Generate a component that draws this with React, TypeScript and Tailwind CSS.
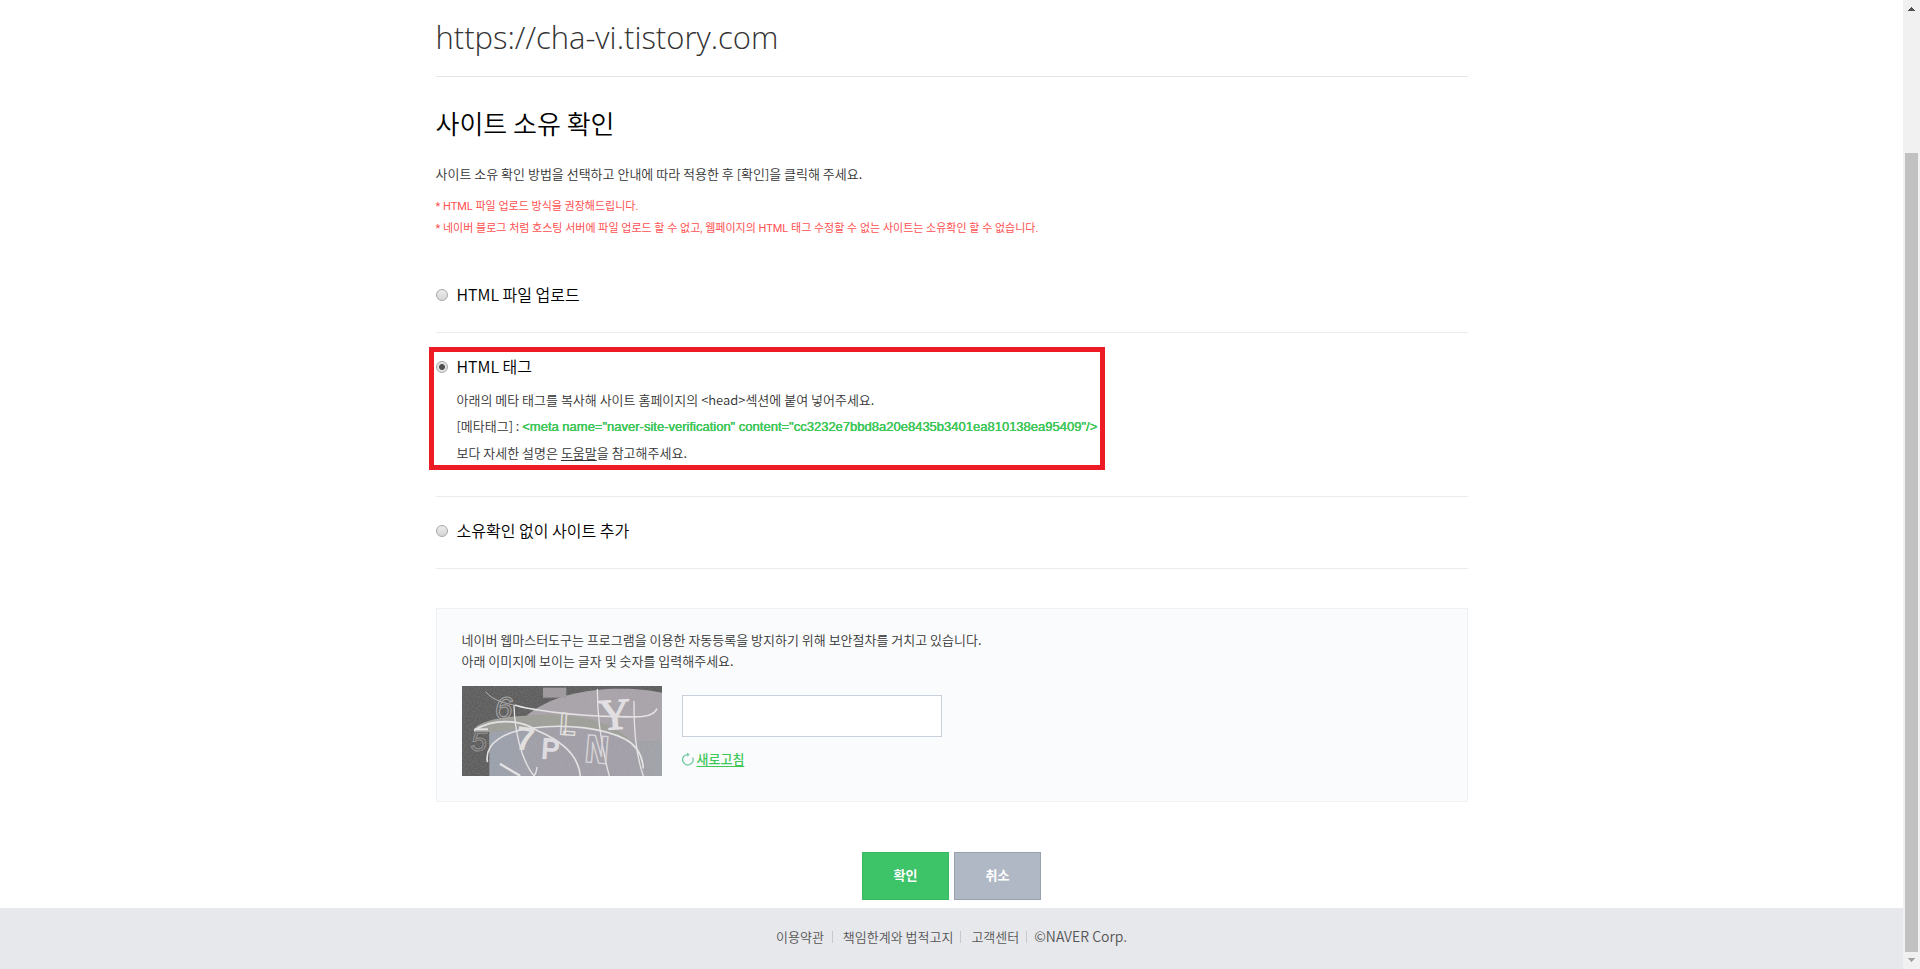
import { useState } from "react";
import type { ReactNode } from "react";

function Captcha() {
  return (
    <svg
      className="h-[90px] w-[200px] shrink-0"
      viewBox="0 0 600 270"
      role="img"
      aria-label="자동등록 방지 이미지"
    >
      <defs>
        <linearGradient id="fade" x1="0" x2="1" y1="0" y2="0">
          <stop offset="0" stopColor="#9aa1ac" />
          <stop offset="0.35" stopColor="#a19ea7" />
          <stop offset="0.8" stopColor="#a29fa8" />
          <stop offset="1" stopColor="#9fa3a8" />
        </linearGradient>
        <filter id="grain" x="0" y="0" width="1" height="1">
          <feTurbulence type="fractalNoise" baseFrequency="0.2" numOctaves="2" />
          <feColorMatrix values="0 0 0 0 0.6  0 0 0 0 0.6  0 0 0 0 0.6  0.9 0 0 0 -0.3" />
        </filter>
      </defs>
      <rect width="600" height="270" fill="#5e5e5e" />
      <path d="M190 92C260 30 370 8 480 8C530 8 570 14 600 20V270H190Z" fill="#a8a3a9" />
      <rect x="243" y="5" width="70" height="30" fill="#9d999d" />
      <path d="M36 138C30 112 110 92 190 89C250 84 310 84 350 92C420 106 480 130 510 170V200H82V138Z" fill="#9f9f99" />
      <path d="M82 142C120 134 160 130 210 126C320 112 430 128 490 160C530 168 570 164 600 166V270H82Z" fill="url(#fade)" />
      <rect width="600" height="270" filter="url(#grain)" opacity="0.3" />
      <g fill="none" stroke="#e4e2e3" strokeWidth="4" strokeLinecap="round">
        <path d="M72 18C92 44 130 52 160 58" strokeWidth="3" opacity="0.6" />
        <path d="M160 58C190 68 320 90 470 92C540 94 575 92 584 69" strokeWidth="5" />
        <path d="M38 132C90 100 170 96 230 136C300 166 350 210 355 270" strokeWidth="5" />
        <path d="M76 226C68 170 130 136 210 126C320 112 430 128 490 160C520 176 540 200 544 246" strokeWidth="5" />
        <path d="M156 60C158 130 176 220 216 270C224 260 224 250 225 244" />
        <path d="M406 10C406 100 420 190 442 270" />
        <path d="M516 46C516 130 520 200 544 270" />
        <path d="M116 235L172 268" strokeWidth="7" />
      </g>
      <g fontFamily="Liberation Sans, sans-serif">
        <text x="98" y="100" fontSize="96" fontWeight="400" fontStyle="italic" fill="none" stroke="#a9a7a7" strokeWidth="3">6</text>
        <text x="26" y="196" fontSize="88" fontWeight="400" fontStyle="italic" fill="none" stroke="#979595" strokeWidth="3">5</text>
        <path d="M38 130h40" stroke="#e4e2e3" strokeWidth="6" />
        <text x="162" y="192" fontSize="100" fontWeight="700" fill="#e2e0df" transform="rotate(8 185 160)">7</text>
        <text x="238" y="218" fontSize="84" fontWeight="400" fill="#dedce0" stroke="#dedce0" strokeWidth="4" fontFamily="Roboto, sans-serif" transform="rotate(4 250 190)">P</text>
        <text x="292" y="146" fontSize="90" fontWeight="700" fill="none" stroke="#e2e0de" strokeWidth="4" fontFamily="Roboto, sans-serif" transform="rotate(4 310 120)">L</text>
        <text x="368" y="230" fontSize="124" fontWeight="700" fill="none" stroke="#d6d4d7" strokeWidth="4" fontFamily="Liberation Mono, monospace" transform="rotate(5 400 190)">N</text>
      </g>
      <text x="410" y="130" fontSize="132" fontWeight="400" stroke="#e2dfe2" strokeWidth="4" fontFamily="Liberation Serif, serif" fill="#e2dfe2" transform="rotate(-4 452 84)">Y</text>
    </svg>
  );
}

function Option({
  value,
  label,
  selected,
  onSelect,
  children,
}: {
  value: string;
  label: string;
  selected: string;
  onSelect: (value: string) => void;
  children?: ReactNode;
}) {
  return (
    <li className="relative border-b border-[#ebebeb] pt-[22px] pb-[26px]">
      <div className="flex h-[23px] items-center gap-[9px]">
        <input
          type="radio"
          name="method"
          id={value}
          checked={selected === value}
          onChange={() => onSelect(value)}
          className="size-3 shrink-0 appearance-none rounded-full border border-[#a8a8a8] bg-linear-to-b from-[#ececec] to-[#d6d6d6] checked:bg-[radial-gradient(circle,#505050_0_2.5px,#e2e2e2_3.5px)]"
        />
        <label htmlFor={value} className="text-[16px] leading-[23px] text-black">
          {label}
        </label>
      </div>
      {children}
    </li>
  );
}

function ScrollBar() {
  return (
    <div className="flex w-[17px] shrink-0 flex-col items-center justify-between bg-[#f1f1f1]" aria-hidden="true">
      <svg className="h-[17px] w-[17px]" viewBox="0 0 17 17" shapeRendering="crispEdges">
        <path d="M8 7h1v1h1v1h1v1h1v1H5v-1h1V9h1V8h1z" fill="#505050" />
      </svg>
      <div className="mt-[136px] w-[13px] flex-1 bg-[#c1c1c1]" />
      <svg className="h-[17px] w-[17px]" viewBox="0 0 17 17" shapeRendering="crispEdges">
        <path d="M5 6h7v1h-1v1h-1v1H9v1H8V9H7V8H6V7H5z" fill="#a3a3a3" />
      </svg>
    </div>
  );
}

export default function App() {
  const [method, setMethod] = useState("tag");

  return (
    <div className="flex min-h-screen bg-white font-['Noto_Sans_CJK_KR',sans-serif] text-[13px] font-[350] text-[#333]">
      <div className="flex min-w-0 flex-1 flex-col">
        <main className="mx-auto w-full max-w-[1032px] flex-1">
          <p className="border-b border-[#e5e5e5] pt-[13px] pb-[15px] font-['Open_Sans',sans-serif] text-[31px] leading-[48px] font-light text-[#333]">
            https://cha-vi.tistory.com
          </p>
          <h1 className="mt-[27px] text-[26px] leading-[38px] font-[350] text-black">사이트 소유 확인</h1>
          <p className="mt-5 leading-[24px]">
            사이트 소유 확인 방법을 선택하고 안내에 따라 적용한 후 [확인]을 클릭해 주세요.
          </p>
          <div className="mt-[10px] font-['Roboto','Noto_Sans_CJK_KR',sans-serif] text-[11px] leading-[22px] font-normal text-[#ff5050]">
            <p>* HTML 파일 업로드 방식을 권장해드립니다.</p>
            <p>* 네이버 블로그 처럼 호스팅 서버에 파일 업로드 할 수 없고, 웹페이지의 HTML 태그 수정할 수 없는 사이트는 소유확인 할 수 없습니다.</p>
          </div>

          <ul className="mt-[21px]">
            <Option value="file" label="HTML 파일 업로드" selected={method} onSelect={setMethod} />
            <Option value="tag" label="HTML 태그" selected={method} onSelect={setMethod}>
              <div className="mt-[9px] mb-1 pl-[21px] leading-[26px]">
                <p>아래의 메타 태그를 복사해 사이트 홈페이지의 &lt;head&gt;섹션에 붙여 넣어주세요.</p>
                <p>
                  [메타태그] :{" "}
                  <strong className="font-['Liberation_Sans',sans-serif] text-[13px] font-normal text-[#40c75a] [text-shadow:0_0_0_currentColor,0_0_0_currentColor]">
                    &lt;meta name="naver-site-verification" content="cc3232e7bbd8a20e8435b3401ea810138ea95409"/&gt;
                  </strong>
                </p>
                <p>
                  보다 자세한 설명은{" "}
                  <a href="#help" className="underline underline-offset-2">
                    도움말
                  </a>
                  을 참고해주세요.
                </p>
              </div>
              <div className="pointer-events-none absolute top-[14px] -left-[7px] h-[123px] w-[676px] border-[5px] border-[#ed1c24]" />
            </Option>
            <Option value="none" label="소유확인 없이 사이트 추가" selected={method} onSelect={setMethod} />
          </ul>

          <section className="mt-[39px] border border-[#f0f2f4] bg-[#fafbfd] px-[25px] pt-5 pb-[25px]">
            <p className="leading-[21px]">
              네이버 웹마스터도구는 프로그램을 이용한 자동등록을 방지하기 위해 보안절차를 거치고 있습니다.
              <br />
              아래 이미지에 보이는 글자 및 숫자를 입력해주세요.
            </p>
            <div className="mt-[15px] flex gap-5">
              <Captcha />
              <div className="pt-[9px]">
                <input
                  type="text"
                  aria-label="보안문자 입력"
                  className="block h-[42px] w-[260px] border border-[#c8d0da] bg-white px-3 text-[16px] outline-none"
                />
                <button
                  type="button"
                  className="mt-[11px] flex items-center gap-[3px] text-[13px] leading-[22px] font-medium text-[#40c75a]"
                >
                  <svg className="h-[14px] w-3" viewBox="0 0 12 14" fill="none" stroke="#6cc79a" strokeWidth="1.2">
                    <path d="M2.2 4A5.2 5.2 0 1 0 10.6 5.4" />
                    <path d="M2.2 4C3.2 3 4.6 2.6 6 2.6" />
                    <path d="M5 0.6L7.6 2.6L5.4 4.8Z" fill="#6cc79a" stroke="none" />
                  </svg>
                  <span className="underline underline-offset-2">새로고침</span>
                </button>
              </div>
            </div>
          </section>

          <div className="mt-[50px] mb-[6px] flex justify-center gap-[5px] text-[13px] font-bold text-white">
            <button type="button" className="h-12 w-[87px] border border-[#37b95f] bg-[#3dc368] pb-[2px]">
              확인
            </button>
            <button type="button" className="h-12 w-[87px] border border-[#97a2b0] bg-[#b1b8c5] pb-[2px]">
              취소
            </button>
          </div>
        </main>

        <footer className="flex h-[61px] items-center justify-center bg-[#e7e8ec] pb-1 text-[13px] text-[#555]">
          <a href="#terms">이용약관</a>
          <span className="mr-[10px] ml-2 h-3 w-px bg-[#c6c8cc]" />
          <a href="#legal">책임한계와 법적고지</a>
          <span className="mr-[10px] ml-[7px] h-3 w-px bg-[#c6c8cc]" />
          <a href="#support">고객센터</a>
          <span className="mr-[7px] ml-[7px] h-3 w-px bg-[#c6c8cc]" />
          <span className="text-[14px]">©NAVER Corp.</span>
        </footer>
      </div>
      <ScrollBar />
    </div>
  );
}
